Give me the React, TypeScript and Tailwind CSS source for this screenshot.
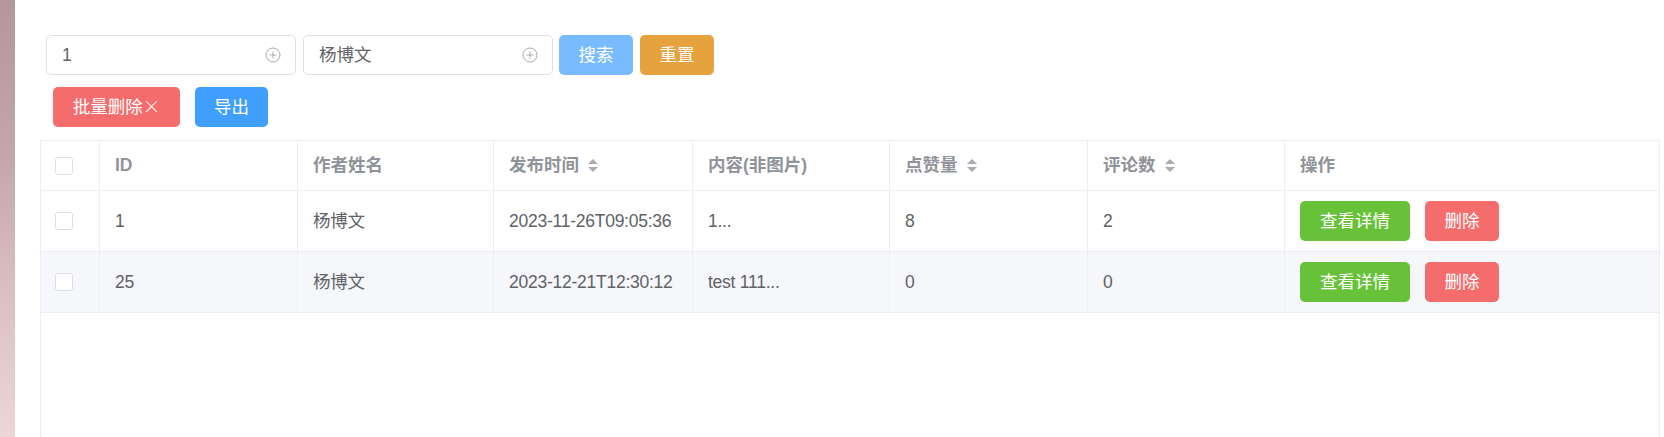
import React from 'react';

type Row = {
    id: string;
    author: string;
    time: string;
    content: string;
    likes: string;
    comments: string;
};

const rows: Row[] = [
    { id: '1', author: '杨博文', time: '2023-11-26T09:05:36', content: '1...', likes: '8', comments: '2' },
    { id: '25', author: '杨博文', time: '2023-12-21T12:30:12', content: 'test 111...', likes: '0', comments: '0' },
];

function SortIcon() {
    return (
        <span className="ml-[9px] inline-flex flex-col gap-[3px]">
            <span className="h-0 w-0 border-x-[5.5px] border-b-[5.5px] border-x-transparent border-b-[#a8abb2]" />
            <span className="h-0 w-0 border-x-[5.5px] border-t-[5.5px] border-x-transparent border-t-[#a8abb2]" />
        </span>
    );
}

function PlusCircle() {
    return (
        <svg width="16" height="16" viewBox="0 0 16 16" fill="none" stroke="#a8abb2" strokeWidth="1">
            <circle cx="8" cy="8" r="7" />
            <path d="M8 4.5v7M4.5 8h7" />
        </svg>
    );
}

function Checkbox() {
    return <span className="block h-[18px] w-[18px] rounded-[3px] border border-[#dcdfe6] bg-white" />;
}

function SearchInput({ value }: { value: string }) {
    return (
        <div className="flex h-[40px] w-[250px] items-center justify-between rounded-[5px] border border-[#dcdfe6] bg-white pl-[15px] pr-[14px]">
            <span className="text-[17.5px] text-[#606266]">{value}</span>
            <PlusCircle />
        </div>
    );
}

const cols = 'grid grid-cols-[59px_198px_196px_199px_197px_198px_197px_1fr]';

export default function App() {
    return (
        <div className="flex h-[437px] w-[1664px] overflow-hidden bg-white font-[family-name:Liberation_Sans,Noto_Sans_CJK_SC,sans-serif]">
            <div className="h-full w-[15px] shrink-0 bg-[linear-gradient(180deg,#b3979d_0%,#c4a5ab_35%,#dcc2c5_70%,#ecd6d6_100%)]" />

            <div className="flex flex-1 flex-col pl-[25px] pr-[4px] pt-[35px]">
                <div className="flex shrink-0 items-center pl-[6px]">
                    <SearchInput value="1" />
                    <div className="ml-[7px]">
                        <SearchInput value="杨博文" />
                    </div>
                    <button className="ml-[6px] h-[40px] w-[74px] rounded-[5px] bg-[#79bbff] text-[17.5px] text-white">搜索</button>
                    <button className="ml-[7px] h-[40px] w-[74px] rounded-[5px] bg-[#e6a23c] text-[17.5px] text-white">重置</button>
                </div>

                <div className="mt-[12px] flex shrink-0 items-center pl-[13px]">
                    <button className="h-[40px] w-[127px] rounded-[5px] bg-[#f56c6c] text-[17.5px] text-white">
                        批量删除<span className="font-[family-name:Noto_Sans_CJK_SC,sans-serif] font-light">×</span>
                    </button>
                    <button className="ml-[15px] h-[40px] w-[73px] rounded-[5px] bg-[#409eff] text-[17.5px] text-white">导出</button>
                </div>

                <div className="mt-[13px] h-[340px] shrink-0 border border-[#ebeef5] text-[17.5px]">
                    <div className={`${cols} h-[50px] font-bold text-[#909399]`}>
                        <div className="flex items-center border-b border-r border-[#ebeef5] pl-[14px]"><Checkbox /></div>
                        <div className="flex items-center border-b border-r border-[#ebeef5] pl-[15px]">ID</div>
                        <div className="flex items-center border-b border-r border-[#ebeef5] pl-[15px]">作者姓名</div>
                        <div className="flex items-center border-b border-r border-[#ebeef5] pl-[15px]">发布时间<SortIcon /></div>
                        <div className="flex items-center border-b border-r border-[#ebeef5] pl-[15px]">内容(非图片)</div>
                        <div className="flex items-center border-b border-r border-[#ebeef5] pl-[15px]">点赞量<SortIcon /></div>
                        <div className="flex items-center border-b border-r border-[#ebeef5] pl-[15px]">评论数<SortIcon /></div>
                        <div className="flex items-center border-b border-[#ebeef5] pl-[15px]">操作</div>
                    </div>

                    {rows.map((r, i) => (
                        <div key={r.id} className={`${cols} h-[61px] tracking-[-0.25px] text-[#606266] ${i === 1 ? 'bg-[#f5f7fa]' : 'bg-white'}`}>
                            <div className="flex items-center border-b border-r border-[#ebeef5] pl-[14px]"><Checkbox /></div>
                            <div className="flex items-center border-b border-r border-[#ebeef5] pl-[15px]">{r.id}</div>
                            <div className="flex items-center border-b border-r border-[#ebeef5] pl-[15px]">{r.author}</div>
                            <div className="flex items-center border-b border-r border-[#ebeef5] pl-[15px]">{r.time}</div>
                            <div className="flex items-center border-b border-r border-[#ebeef5] pl-[15px]">{r.content}</div>
                            <div className="flex items-center border-b border-r border-[#ebeef5] pl-[15px]">{r.likes}</div>
                            <div className="flex items-center border-b border-r border-[#ebeef5] pl-[15px]">{r.comments}</div>
                            <div className="flex items-center border-b border-[#ebeef5] pl-[15px] tracking-normal">
                                <button className="h-[40px] w-[110px] rounded-[5px] bg-[#67c23a] text-white">查看详情</button>
                                <button className="ml-[15px] h-[40px] w-[74px] rounded-[5px] bg-[#f56c6c] text-white">删除</button>
                            </div>
                        </div>
                    ))}
                </div>
            </div>
        </div>
    );
}
